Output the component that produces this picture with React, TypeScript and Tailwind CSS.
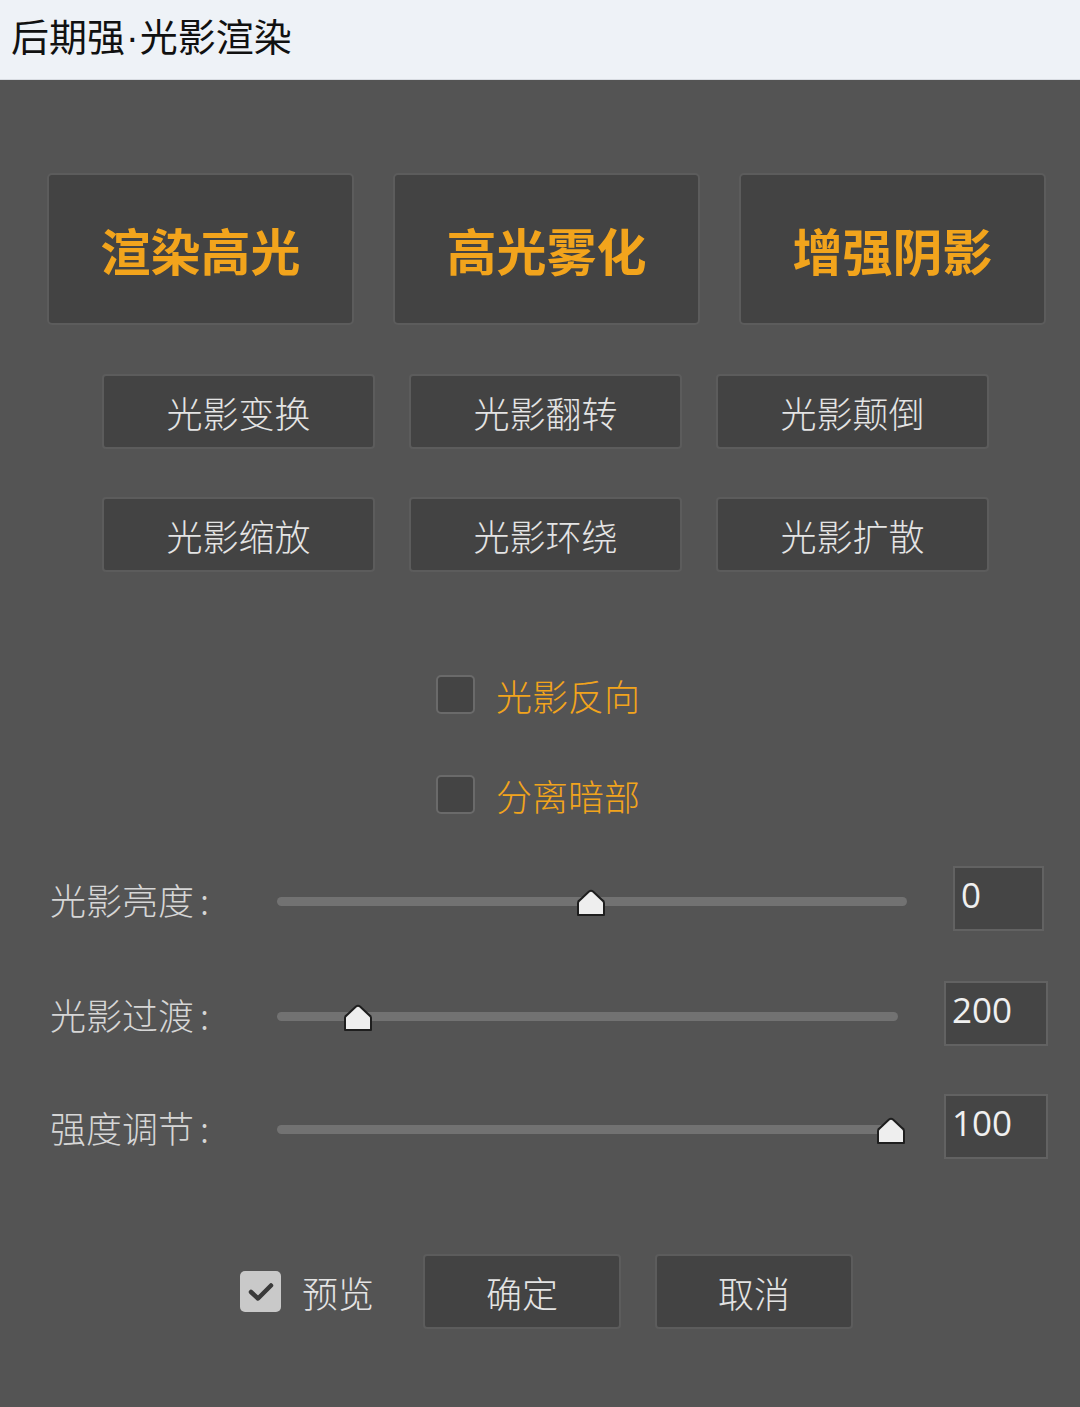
import React from 'react';

const font = { fontFamily: '"Noto Sans CJK SC", "Noto Sans", sans-serif' };

function BigButton({ label }: { label: string }) {
  return (
    <div className="w-[307px] h-[152px] flex items-center justify-center bg-[#434343] border-2 border-[#5c5c5c] rounded-[5px]">
      <span className="text-[50px] font-bold text-[#f2a41c]">{label}</span>
    </div>
  );
}

function SmallButton({ label, w = 'w-[273px]' }: { label: string; w?: string }) {
  return (
    <div className={`${w} h-[75px] flex items-center justify-center bg-[#434343] border-2 border-[#5c5c5c] rounded-[4px]`}>
      <span className="text-[36px] text-[#e4e4e4] font-light">{label}</span>
    </div>
  );
}

function CheckRow({ label }: { label: string }) {
  return (
    <div className="flex items-center pl-[436px]">
      <div className="w-[39px] h-[39px] bg-[#444444] border-2 border-[#6a6a6a] rounded-[5px]" />
      <span className="ml-[21px] text-[36px] text-[#f2a41c] font-light leading-none">{label}</span>
    </div>
  );
}

function Thumb() {
  return (
    <svg width="30" height="28" viewBox="0 0 30 28">
      <path d="M2 26 L2 14 Q2 12 4 11 L13 2.5 Q15 1 17 2.5 L26 11 Q28 12 28 14 L28 26 Z" fill="#eeeeee" stroke="#1e1e1e" strokeWidth="2" strokeLinejoin="round" />
    </svg>
  );
}

function SliderRow({
  label,
  value,
  pct,
  trackW,
  inputW,
}: {
  label: string;
  value: string;
  pct: number;
  trackW: string;
  inputW: string;
}) {
  return (
    <div className="flex items-center pl-[50px] h-[65px]">
      <span className="w-[227px] text-[36px] text-[#d6d6d6] font-light leading-none">
        {label}
        <span className="ml-[6px]">:</span>
      </span>
      <div className={`relative ${trackW} h-[9px] rounded-full bg-[#727272] translate-y-[3px]`}>
        <div className="absolute top-[-8px] -translate-x-1/2" style={{ left: `${pct}%` }}>
          <Thumb />
        </div>
      </div>
      <div className={`ml-[46px] ${inputW} h-[65px] bg-[#454545] border-2 border-[#626262] flex items-center pl-[6px] pb-[8px]`}>
        <span className="text-[35px] text-[#f0f0f0] leading-none" style={{ fontFamily: '"Open Sans", "Noto Sans", sans-serif' }}>
          {value}
        </span>
      </div>
    </div>
  );
}

export default function App() {
  return (
    <div className="w-[1080px] h-[1407px] bg-[#545454] flex flex-col" style={font}>
      <div className="h-[80px] bg-[#eef2f7] flex items-center pl-[11px] border-b border-[#d8dce2]">
        <span className="text-[38px] text-[#111111] leading-none pb-[6px]">
          后期强
          <span className="mx-[1px]" style={{ fontFamily: '"Liberation Sans", sans-serif' }}>·</span>
          光影渲染
        </span>
      </div>

      <div className="flex gap-[39px] pl-[47px] mt-[93px]">
        <BigButton label="渲染高光" />
        <BigButton label="高光雾化" />
        <BigButton label="增强阴影" />
      </div>

      <div className="flex gap-[34px] pl-[102px] mt-[49px]">
        <SmallButton label="光影变换" />
        <SmallButton label="光影翻转" />
        <SmallButton label="光影颠倒" />
      </div>
      <div className="flex gap-[34px] pl-[102px] mt-[48px]">
        <SmallButton label="光影缩放" />
        <SmallButton label="光影环绕" />
        <SmallButton label="光影扩散" />
      </div>

      <div className="mt-[103px]">
        <CheckRow label="光影反向" />
      </div>
      <div className="mt-[61px]">
        <CheckRow label="分离暗部" />
      </div>

      <div className="mt-[52px]">
        <SliderRow label="光影亮度" value="0" pct={49.8} trackW="w-[630px]" inputW="w-[91px]" />
      </div>
      <div className="mt-[50px]">
        <SliderRow label="光影过渡" value="200" pct={13.1} trackW="w-[621px]" inputW="w-[104px]" />
      </div>
      <div className="mt-[48px]">
        <SliderRow label="强度调节" value="100" pct={98.8} trackW="w-[621px]" inputW="w-[104px]" />
      </div>

      <div className="flex items-center pl-[240px] mt-[95px]">
        <div className="w-[41px] h-[41px] bg-[#c9c9c9] rounded-[5px] flex items-center justify-center">
          <svg width="26" height="20" viewBox="0 0 26 20">
            <path d="M3 10 L10 16.5 L23 3.5" fill="none" stroke="#3a3a3a" strokeWidth="4.5" strokeLinecap="round" strokeLinejoin="round" />
          </svg>
        </div>
        <span className="ml-[21px] text-[36px] text-[#e4e4e4] font-light leading-none">预览</span>
        <div className="ml-[49px] flex gap-[34px]">
          <SmallButton label="确定" w="w-[198px]" />
          <SmallButton label="取消" w="w-[198px]" />
        </div>
      </div>
    </div>
  );
}
